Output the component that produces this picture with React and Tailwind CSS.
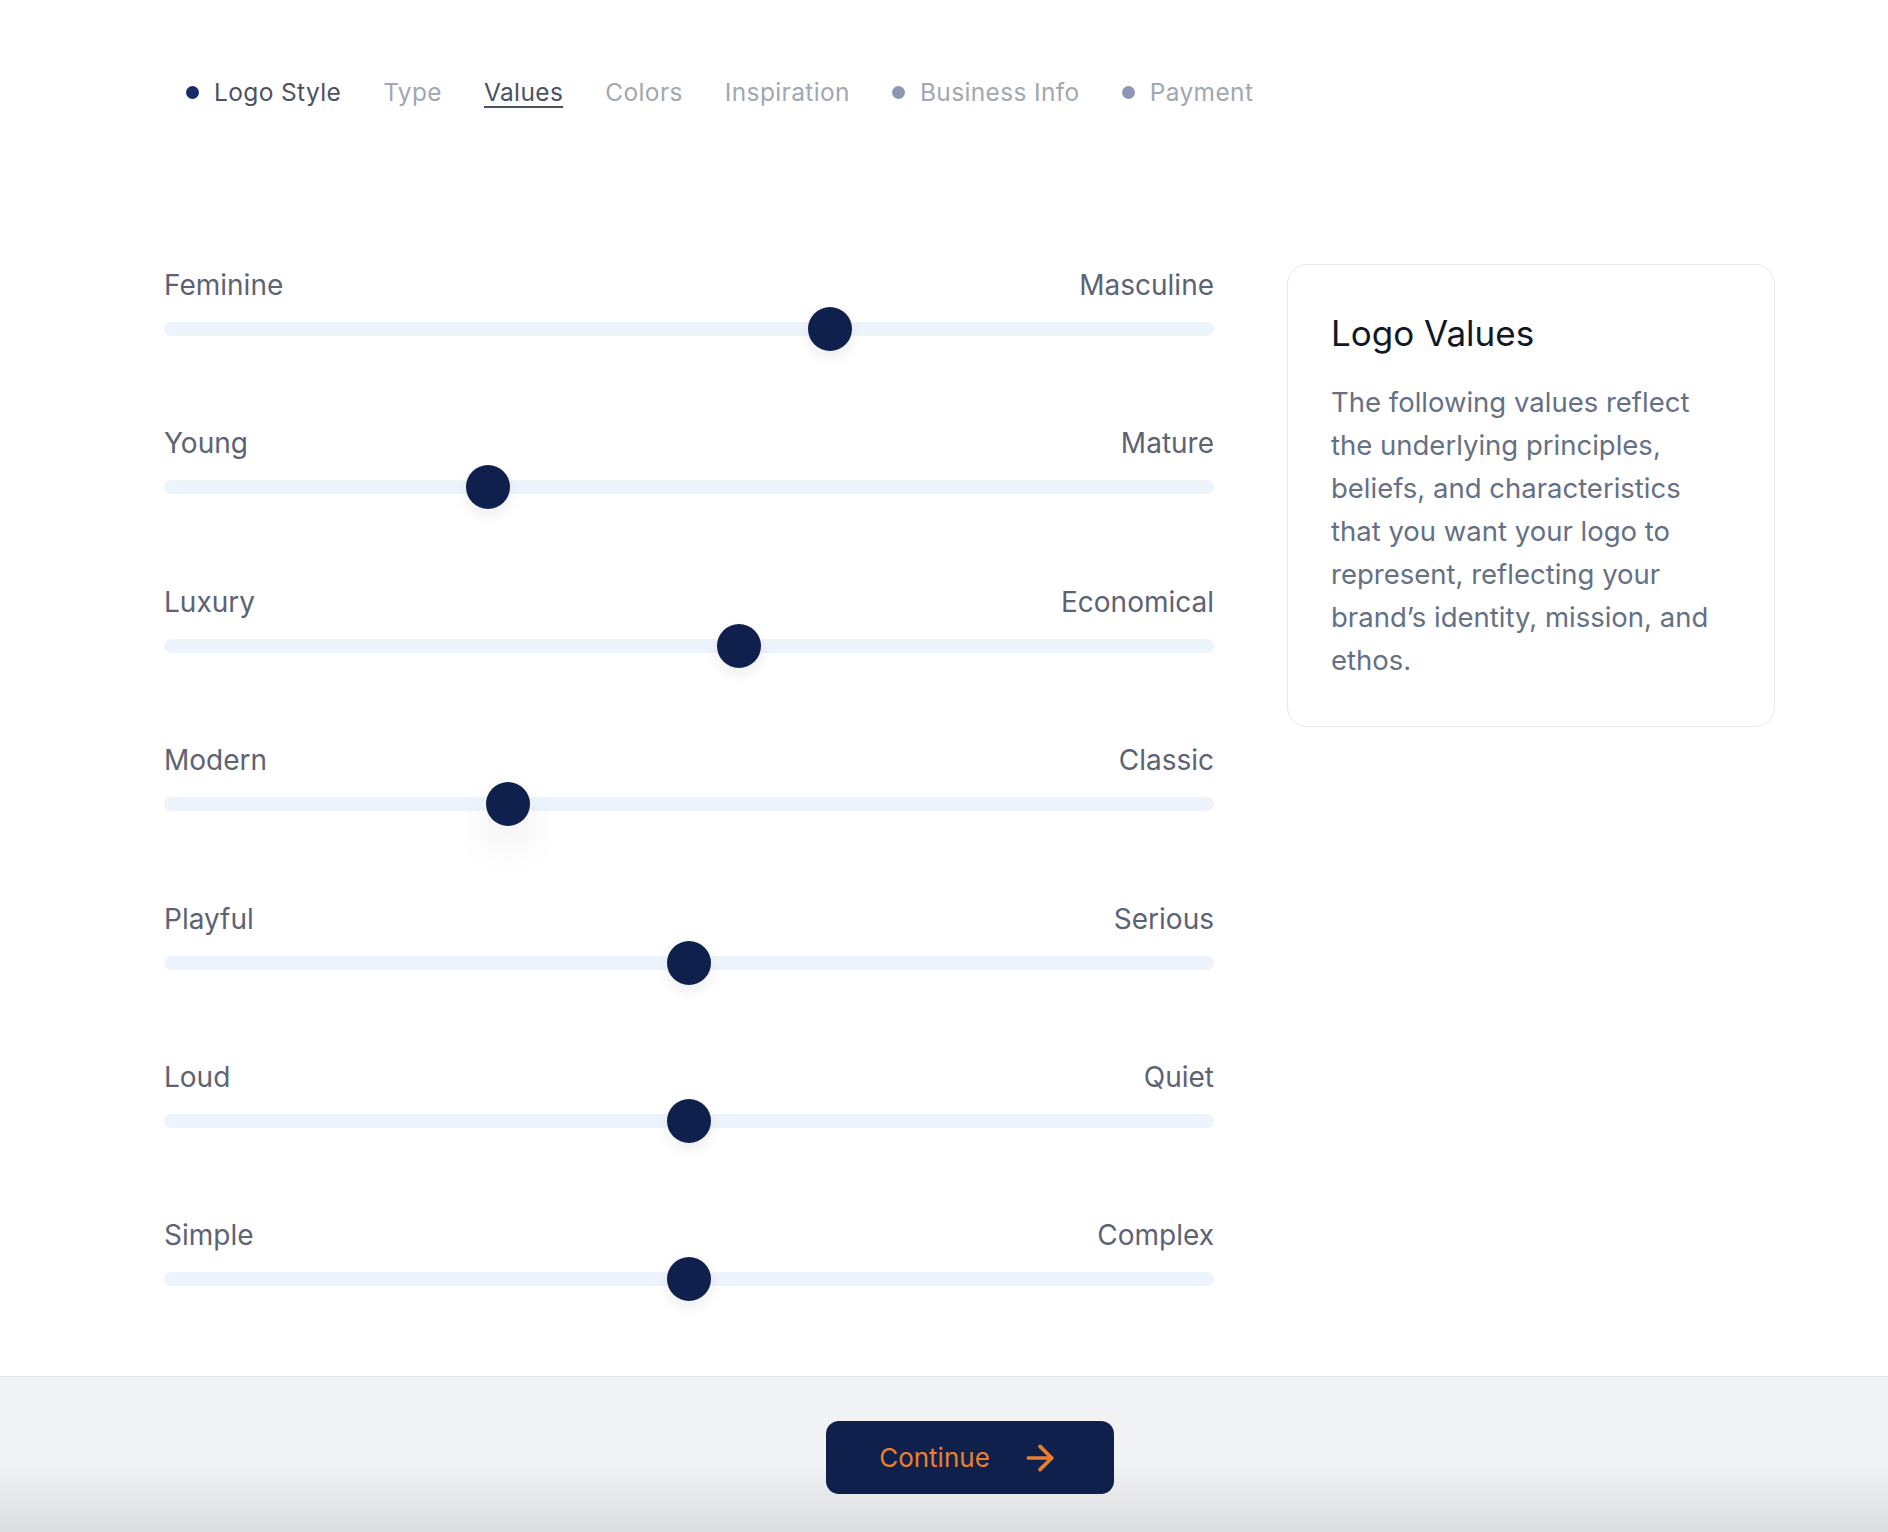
import { ArrowRight } from 'lucide-react';

const STEPS = [
  { label: 'Logo Style', dot: 'bg-[#1b2a6b]', text: 'text-[#4b5263]' },
  { label: 'Type', text: 'text-[#a3a7b1]' },
  { label: 'Values', text: 'text-[#4b5263] underline decoration-2 underline-offset-[5px]' },
  { label: 'Colors', text: 'text-[#a3a7b1]' },
  { label: 'Inspiration', text: 'text-[#a3a7b1]' },
  { label: 'Business Info', dot: 'bg-[#8d96b4]', text: 'text-[#a3a7b1]' },
  { label: 'Payment', dot: 'bg-[#8d96b4]', text: 'text-[#a3a7b1]' },
];

const VALUES = [
  { left: 'Feminine', right: 'Masculine', value: 64 },
  { left: 'Young', right: 'Mature', value: 30 },
  { left: 'Luxury', right: 'Economical', value: 55 },
  { left: 'Modern', right: 'Classic', value: 32, active: true },
  { left: 'Playful', right: 'Serious', value: 50 },
  { left: 'Loud', right: 'Quiet', value: 50 },
  { left: 'Simple', right: 'Complex', value: 50 },
];

function ValueSlider({ left, right, value, active }) {
  return (
    <div className="flex flex-col gap-[6px]">
      <div className="flex items-center justify-between text-[28px] leading-[32px] text-[#5d6372]">
        <span>{left}</span>
        <span>{right}</span>
      </div>
      <div className="relative h-[44px]">
        <div className="absolute left-0 right-0 top-[15px] h-[14px] rounded-full bg-[#eef4fc]" />
        <div className="absolute inset-y-0 left-[22px] right-[22px]">
          <div
            className={`absolute top-0 h-[44px] w-[44px] -translate-x-1/2 rounded-full bg-[#10204c] ${
              active
                ? 'shadow-[0_20px_40px_rgba(15,23,42,0.08)]'
                : 'shadow-[0_6px_14px_rgba(15,23,42,0.08)]'
            }`}
            style={{ left: `${value}%` }}
          />
        </div>
      </div>
    </div>
  );
}

export default function App() {
  return (
    <div className="bg-white font-['Inter','Noto_Sans',sans-serif]">
      <nav className="flex items-center gap-[42px] pl-[186px] pt-[76px] text-[24.5px] leading-[32px] tracking-[0.015em]">
        {STEPS.map((step) => (
          <div key={step.label} className="flex items-center gap-[15px]">
            {step.dot && <span className={`h-[13px] w-[13px] rounded-full ${step.dot}`} />}
            <span className={step.text}>{step.label}</span>
          </div>
        ))}
      </nav>

      <main className="mt-[156px] flex items-start gap-[73px] pl-[164px] pr-[113px]">
        <div className="flex w-[1050px] flex-col gap-[76.4px] pt-[5px]">
          {VALUES.map((item) => (
            <ValueSlider key={item.left} {...item} />
          ))}
        </div>

        <aside className="w-[488px] rounded-[20px] border border-[#e6e8eb] px-[43px] pb-[44px] pt-[44px]">
          <h2 className="text-[35px] leading-[48px] text-[#101828]">Logo Values</h2>
          <p className="mt-[24px] text-[27.5px] leading-[43px] text-[#667085]">
            The following values reflect
            <br />
            the underlying principles,
            <br />
            beliefs, and characteristics
            <br />
            that you want your logo to
            <br />
            represent, reflecting your
            <br />
            brand’s identity, mission, and
            <br />
            ethos.
          </p>
        </aside>
      </main>

      <footer className="mt-[75px] h-[156px] border-t border-[#e3e5e8] bg-[linear-gradient(to_bottom,#f2f3f5_0%,#f1f2f4_55%,#dcdddf_100%)] pl-[164px] pr-[113px] pt-[44px]">
        <div className="flex justify-center">
          <button
            type="button"
            className="flex h-[73px] w-[288px] items-center justify-center gap-[30px] rounded-[13px] bg-[#10204c] text-[26px] text-[#e8802d]"
          >
            <span>Continue</span>
            <ArrowRight size={40} strokeWidth={2.2} />
          </button>
        </div>
      </footer>
    </div>
  );
}
